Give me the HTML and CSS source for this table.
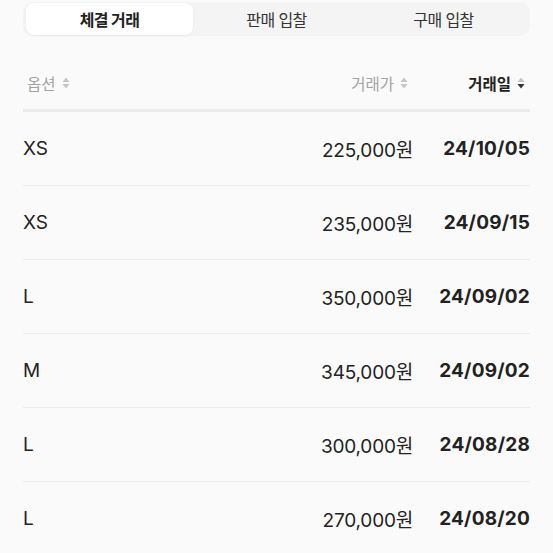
FILE: index.html
```html
<!DOCTYPE html>
<html lang="ko">
<head>
<meta charset="utf-8">
<link rel="stylesheet" href="styles.css">
</head>
<body>
<div class="page">
  <div class="tabs">
    <div class="tab active">체결 거래</div>
    <div class="tab">판매 입찰</div>
    <div class="tab">구매 입찰</div>
  </div>
  <div class="table">
    <div class="head">
      <div class="hcell opt">옵션 <svg class="sort" viewBox="0 0 8 12"><path class="up" d="M4 0.5 L7.5 5 H0.5 Z"/><path class="dn" d="M4 11.5 L7.5 7 H0.5 Z"/></svg></div>
      <div class="hcell price">거래가 <svg class="sort" viewBox="0 0 8 12"><path class="up" d="M4 0.5 L7.5 5 H0.5 Z"/><path class="dn" d="M4 11.5 L7.5 7 H0.5 Z"/></svg></div>
      <div class="hcell date on">거래일 <svg class="sort" viewBox="0 0 8 12"><path class="up" d="M4 0.5 L7.5 5 H0.5 Z"/><path class="dn dark" d="M4 11.5 L7.5 7 H0.5 Z"/></svg></div>
    </div>
    <div class="row"><div class="opt">XS</div><div class="price">225,000원</div><div class="date">24/10/05</div></div>
    <div class="row"><div class="opt">XS</div><div class="price">235,000원</div><div class="date">24/09/15</div></div>
    <div class="row"><div class="opt">L</div><div class="price">350,000원</div><div class="date">24/09/02</div></div>
    <div class="row"><div class="opt">M</div><div class="price">345,000원</div><div class="date">24/09/02</div></div>
    <div class="row"><div class="opt">L</div><div class="price">300,000원</div><div class="date">24/08/28</div></div>
    <div class="row"><div class="opt">L</div><div class="price">270,000원</div><div class="date">24/08/20</div></div>
  </div>
</div>
</body>
</html>
```
FILE: styles.css
```css
html, body {
  margin: 0;
  padding: 0;
  background: #fafafa;
}
body {
  font-family: "Inter", "Noto Sans CJK KR", sans-serif;
  color: #222;
  overflow: hidden;
}
.page {
  padding: 2px 23px 0 23px;
}
.tabs {
  display: grid;
  grid-template-columns: 1fr 1fr 1fr;
  background: #f4f4f4;
  border-radius: 10px;
  padding: 1px 3px;
  height: 32px;
}
.tab {
  display: flex;
  align-items: center;
  justify-content: center;
  font-size: 16px;
  letter-spacing: -0.6px;
  color: #333;
  border-radius: 8px;
}
.tab.active {
  background: #fff;
  font-weight: 700;
  color: #222;
  box-shadow: 0 1px 3px rgba(0,0,0,0.05);
}
.table {
  margin-top: 36px;
}
.head, .row {
  display: grid;
  grid-template-columns: 1fr 150px 117px;
  align-items: center;
}
.head {
  height: 20px;
  padding-bottom: 17px;
  border-bottom: 3px solid #ebebeb;
  font-size: 15.5px;
  color: #a3a3a3;
}
.hcell {
  display: flex;
  align-items: center;
  gap: 4px;
  padding-left: 4px;
}
.hcell.price, .hcell.date {
  justify-content: flex-end;
  padding-right: 5px;
}
.hcell.on {
  color: #222;
  font-weight: 700;
}
.sort {
  width: 8px;
  height: 12px;
  margin-left: 2px;
}
.sort path { fill: #c4c4c4; }
.sort path.dark { fill: #333; }
.row {
  height: 73px;
  border-bottom: 1px solid #ececec;
  font-size: 19px;
}
.row:last-child { border-bottom: none; }
.row .price, .row .date { text-align: right; }
.row .price { letter-spacing: -0.2px; }
.row .date { font-weight: 700; letter-spacing: 0.2px; }
```
